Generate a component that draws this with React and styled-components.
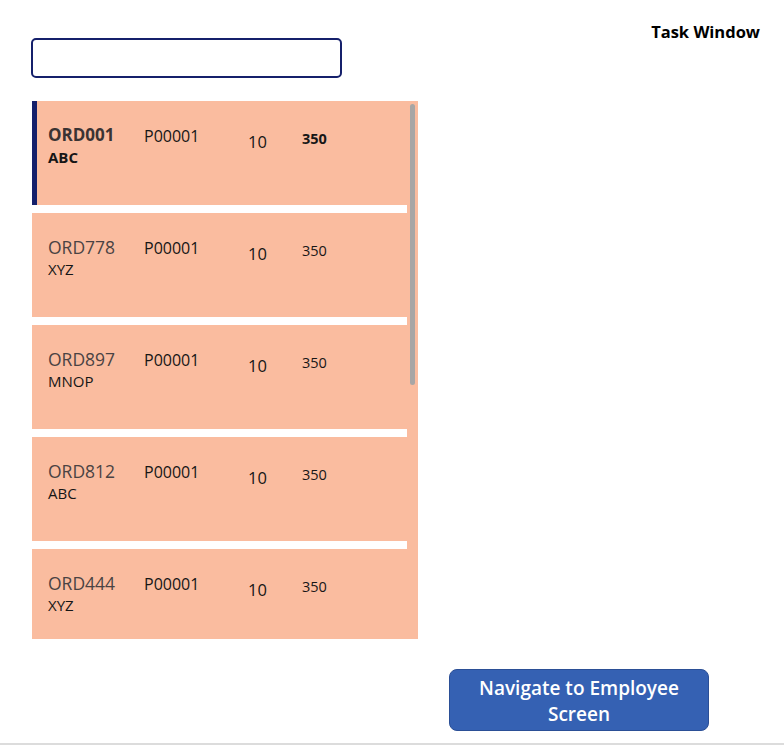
import React from "react"
import styled, { createGlobalStyle } from "styled-components"

const colors = {
  navy: "#15206b",
  peach: "#fabc9f",
  text: "#161616",
  muted: "#4a4343",
  button: "#3561b3",
  scroll: "#a8a6a5",
}

const GlobalStyle = createGlobalStyle`
  html, body {
    margin: 0;
    padding: 0;
    background: #fff;
  }
  body {
    font-family: "Open Sans", "Noto Sans", sans-serif;
    color: ${colors.text};
  }
`

const Screen = styled.div`
  width: 784px;
  height: 745px;
  box-sizing: border-box;
  border-bottom: 2px solid #dcdcdc;
  overflow: hidden;
  display: flex;
  flex-direction: column;
`

const Header = styled.header`
  display: flex;
  justify-content: space-between;
  align-items: flex-start;
  padding: 21px 24px 0 31px;
`

const SearchBox = styled.input`
  margin-top: 17px;
  width: 311px;
  height: 40px;
  box-sizing: border-box;
  border: 2px solid ${colors.navy};
  border-radius: 5px;
  background: #fff;
  outline: none;
  font: inherit;
  padding: 0 10px;
`

const Title = styled.h1`
  margin: 0;
  font-size: 16.5px;
  font-weight: 700;
  color: #000;
  line-height: 21px;
`

const Gallery = styled.div`
  margin: 23px 0 0 32px;
  width: 386px;
  height: 538px;
  display: flex;
  background: ${colors.peach};
  overflow: hidden;
`

const List = styled.div`
  width: 375px;
  display: flex;
  flex-direction: column;
  gap: 8px;
  background: #fff;
  align-self: flex-start;
`

const Track = styled.div`
  flex: 1;
  padding: 3px 3px 0 3px;
`

const Thumb = styled.div`
  width: 5px;
  height: 281px;
  border-radius: 3px;
  background: ${colors.scroll};
`

const Row = styled.div`
  height: 104px;
  flex-shrink: 0;
  box-sizing: border-box;
  background: ${colors.peach};
  border-left: 5px solid ${(p) => (p.selected ? colors.navy : colors.peach)};
  padding-left: 11px;
  display: grid;
  grid-template-columns: 96px 104px 54px auto;
  align-items: start;
`

const Order = styled.div`
  padding-top: 23px;
`

const OrderId = styled.div`
  font-size: ${(p) => (p.selected ? "17px" : "17.5px")};
  font-weight: ${(p) => (p.selected ? 700 : 400)};
  color: ${(p) => (p.selected ? "#3a3333" : colors.muted)};
  line-height: 22px;
`

const Customer = styled.div`
  font-size: 15px;
  font-weight: ${(p) => (p.selected ? 700 : 400)};
  line-height: 20px;
  margin-top: 1px;
`

const Product = styled.div`
  font-size: 16px;
  line-height: 22px;
  padding-top: 24px;
`

const Qty = styled.div`
  font-size: 16.5px;
  line-height: 22px;
  padding-top: 30px;
`

const Amount = styled.div`
  font-size: 14.5px;
  font-weight: ${(p) => (p.selected ? 700 : 400)};
  line-height: 20px;
  padding-top: 28px;
`

const Footer = styled.footer`
  display: flex;
  justify-content: flex-end;
  padding: 30px 75px 0 0;
`

const NavButton = styled.button`
  width: 260px;
  height: 62px;
  border: 1px solid #2b4f96;
  border-radius: 8px;
  background: ${colors.button};
  color: #fff;
  font-family: "Open Sans", "Noto Sans", sans-serif;
  font-size: 19px;
  font-weight: 600;
  line-height: 26px;
  padding: 2px 20px 0;
  cursor: pointer;
`

const orders = [
  { id: "ORD001", customer: "ABC", product: "P00001", qty: 10, amount: 350 },
  { id: "ORD778", customer: "XYZ", product: "P00001", qty: 10, amount: 350 },
  { id: "ORD897", customer: "MNOP", product: "P00001", qty: 10, amount: 350 },
  { id: "ORD812", customer: "ABC", product: "P00001", qty: 10, amount: 350 },
  { id: "ORD444", customer: "XYZ", product: "P00001", qty: 10, amount: 350 },
]

const App = () => {
  const selectedId = "ORD001"

  return (
    <>
      <GlobalStyle />
      <Screen>
        <Header>
          <SearchBox type="text" />
          <Title>Task Window</Title>
        </Header>
        <Gallery>
          <List>
            {orders.map((o) => {
              const selected = o.id === selectedId
              return (
                <Row key={o.id} selected={selected}>
                  <Order>
                    <OrderId selected={selected}>{o.id}</OrderId>
                    <Customer selected={selected}>{o.customer}</Customer>
                  </Order>
                  <Product>{o.product}</Product>
                  <Qty>{o.qty}</Qty>
                  <Amount selected={selected}>{o.amount}</Amount>
                </Row>
              )
            })}
          </List>
          <Track>
            <Thumb />
          </Track>
        </Gallery>
        <Footer>
          <NavButton>Navigate to Employee Screen</NavButton>
        </Footer>
      </Screen>
    </>
  )
}

export default App
